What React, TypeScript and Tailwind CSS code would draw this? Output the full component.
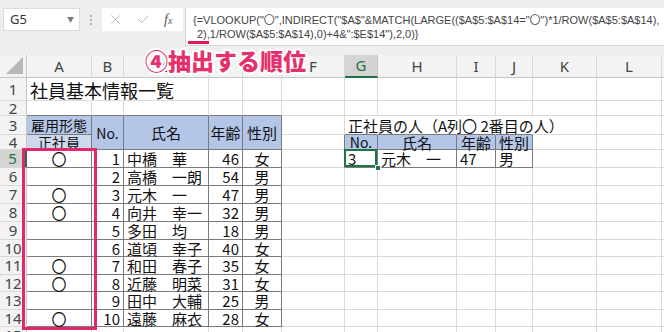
import React from 'react';
import { X, Check } from 'lucide-react';

type Align = 'l' | 'c' | 'r';
type CellData = { t: string; a?: Align; bg?: 'blue' | 'pale'; big?: boolean; sm?: boolean };

const COLS = ['A', 'B', 'C', 'D', 'E', 'F', 'G', 'H', 'I', 'J', 'K', 'L', 'M'];
const LAST_ROW = 15;

// [No, 氏名, 年齢, 性別, 正社員]
const people: [number, string, number, string, boolean][] = [
  [1, '中橋　華', 46, '女', true],
  [2, '高橋　一朗', 54, '男', false],
  [3, '元木　一', 47, '男', true],
  [4, '向井　幸一', 32, '男', true],
  [5, '多田　均', 18, '男', false],
  [6, '道頃　幸子', 40, '女', false],
  [7, '和田　春子', 35, '女', true],
  [8, '近藤　明菜', 31, '女', true],
  [9, '田中　大輔', 25, '男', false],
  [10, '遠藤　麻衣', 28, '女', true],
];

const cells: Record<string, CellData> = {
  '1,0': { t: '社員基本情報一覧', a: 'l', big: true },
  '3,0': { t: '雇用形態', a: 'c', bg: 'blue', sm: true },
  '4,0': { t: '正社員', a: 'c', bg: 'pale', sm: true },
  '3,1': { t: 'No.', a: 'c', bg: 'blue', sm: true },
  '3,2': { t: '氏名', a: 'c', bg: 'blue' },
  '3,3': { t: '年齢', a: 'c', bg: 'blue' },
  '3,4': { t: '性別', a: 'c', bg: 'blue' },
  '3,6': { t: '正社員の人（A列〇 2番目の人）', a: 'l' },
  '4,6': { t: 'No.', a: 'c', bg: 'blue', sm: true },
  '4,7': { t: '氏名', a: 'c', bg: 'blue' },
  '4,8': { t: '年齢', a: 'c', bg: 'blue' },
  '4,9': { t: '性別', a: 'c', bg: 'blue' },
  '5,6': { t: '3', a: 'l' },
  '5,7': { t: '元木　一', a: 'l' },
  '5,8': { t: '47', a: 'l' },
  '5,9': { t: '男', a: 'l' },
};
people.forEach(([no, name, age, sex, regular], i) => {
  const r = i + 5;
  if (regular) cells[`${r},0`] = { t: '〇', a: 'c' };
  cells[`${r},1`] = { t: String(no), a: 'r' };
  cells[`${r},2`] = { t: name, a: 'l' };
  cells[`${r},3`] = { t: String(age), a: 'r' };
  cells[`${r},4`] = { t: sex, a: 'c' };
});

const inTable = (r: number, c: number) =>
  (r >= 3 && r <= 14 && c >= 0 && c <= 4) || (r >= 4 && r <= 5 && c >= 6 && c <= 9);

const isMerged = (r: number, c: number) => r === 3 && c >= 1 && c <= 4;
const hiddenRight = (r: number, c: number) => (r === 1 && c <= 1) || (r === 3 && c >= 6 && c <= 9);

const alignCls: Record<Align, string> = {
  l: 'justify-start pl-[3px]',
  c: 'justify-center',
  r: 'justify-end pr-[3px]',
};

const Cell: React.FC<{ r: number; c: number }> = ({ r, c }) => {
  const d = cells[`${r},${c}`];
  const bottomRow = isMerged(r, c) ? 4 : r;
  const right = hiddenRight(r, c)
    ? 'border-r-transparent'
    : inTable(r, c) || inTable(r, c + 1)
      ? 'border-r-[#7a7a7a]'
      : 'border-r-[#dadada]';
  const bottom =
    inTable(bottomRow, c) || inTable(bottomRow + 1, c) ? 'border-b-[#7a7a7a]' : 'border-b-[#dadada]';
  const bg = d?.bg === 'blue' ? 'bg-[#b4c6e7]' : d?.bg === 'pale' ? 'bg-[#cfd9ee]' : '';
  const size = d?.big ? 'text-[18px] items-end pb-[1px]' : d?.sm ? 'text-[14px] items-center' : 'text-[15px] items-center';
  const selected = r === 5 && c === 6;

  return (
    <div
      className={`relative flex whitespace-nowrap leading-none text-[#111] border-r border-b ${right} ${bottom} ${bg} ${size} ${
        isMerged(r, c) ? 'row-span-2' : ''
      } ${alignCls[d?.a ?? 'l']}`}
    >
      {d && <span className="relative z-10">{d.t}</span>}
      {selected && (
        <>
          <div className="absolute -left-px -top-px w-[calc(100%+1px)] h-[calc(100%+1px)] border-2 border-[#217346] z-20" />
          <div className="absolute right-[-4px] bottom-[-4px] w-[6px] h-[6px] bg-[#217346] border border-white z-30" />
        </>
      )}
    </div>
  );
};

export default function App() {
  const rows = Array.from({ length: LAST_ROW }, (_, i) => i + 1);

  return (
    <div className="relative w-[664px] h-[332px] overflow-hidden bg-white font-['Noto_Sans_CJK_JP',sans-serif]">
      {/* Formula bar */}
      <div className="relative h-[55px] bg-[#eeeeee] flex items-start pt-[8px]">
        <div className="ml-[3px] w-[77px] h-[23px] bg-white border border-[#dcdcdc] flex items-center justify-between pl-[6px] pr-[5px]">
          <span className="text-[13px] text-[#333] font-['Noto_Sans',sans-serif]">G5</span>
          <span className="text-[7px] text-[#777]">▼</span>
        </div>
        <div className="w-[22px] h-[23px] flex flex-col items-center justify-center gap-[2px]">
          <span className="w-[2px] h-[2px] bg-[#b0b0b0]" />
          <span className="w-[2px] h-[2px] bg-[#b0b0b0]" />
          <span className="w-[2px] h-[2px] bg-[#b0b0b0]" />
        </div>
        <div className="w-[81px] h-[23px] bg-white flex items-center pl-[6px] gap-[13px]">
          <X size={15} strokeWidth={1.3} className="text-[#a8a8a8]" />
          <Check size={15} strokeWidth={1.3} className="text-[#a8a8a8]" />
          <span className="font-['Liberation_Serif',serif] italic text-[14px] text-[#555] leading-none">
            f<span className="text-[10px]">x</span>
          </span>
        </div>
        <div className="ml-[2px] flex-1 h-[38px] bg-white border-l border-b border-[#d6d6d6] pl-[7px] pt-[5px] text-[11px] leading-[14px] text-[#444] font-['Liberation_Sans','Noto_Sans_CJK_JP',sans-serif] whitespace-nowrap overflow-hidden">
          <div>{'{=VLOOKUP("〇",INDIRECT("$A$"&MATCH(LARGE(($A$5:$A$14="〇")*1/ROW($A$5:$A$14),'}</div>
          <div className="pl-[4px]">{'2),1/ROW($A$5:$A$14),0)+4&":$E$14"),2,0)}'}</div>
        </div>
        <div className="absolute left-[188px] top-[41px] w-[21px] h-[3px] bg-[#e3185b]" />
      </div>

      {/* Sheet grid */}
      <div className="grid grid-cols-[27px_65px_32px_85px_34px_39px_63px_33px_79px_39px_37px_64px_65px_80px] grid-rows-[23px_23px_15px_19px_15px_18px_18px_18px_18px_18px_17px_18px_17px_18px_17px_18px]">
        {/* corner */}
        <div className="relative bg-[#f3f3f3] border-r border-b border-[#c6c6c6]">
          <div className="absolute right-[3px] bottom-[3px] w-0 h-0 border-l-[17px] border-l-transparent border-b-[17px] border-b-[#b8b8b8]" />
        </div>
        {COLS.map((col, c) => (
          <div
            key={col}
            className={`flex items-center justify-center text-[15px] font-['Noto_Sans',sans-serif] border-r ${
              c === 6
                ? 'bg-[#d4d4d4] text-[#217346] border-b-2 border-b-[#217346] border-r-[#c6c6c6]'
                : 'bg-[#f3f3f3] text-[#444] border-b border-b-[#c6c6c6] border-r-[#d8d8d8]'
            }`}
          >
            {col}
          </div>
        ))}
        {rows.map((r) => (
          <React.Fragment key={r}>
            <div
              className={`flex items-center justify-center text-[15px] leading-none font-['Noto_Sans',sans-serif] border-b border-b-[#d8d8d8] ${
                r === 5
                  ? 'bg-[#d4d4d4] text-[#217346] border-r-2 border-r-[#217346]'
                  : 'bg-[#f3f3f3] text-[#444] border-r border-r-[#c6c6c6]'
              }`}
            >
              {r}
            </div>
            {COLS.map((_, c) => (r === 4 && c >= 1 && c <= 4 ? null : <Cell key={c} r={r} c={c} />))}
          </React.Fragment>
        ))}
      </div>

      {/* Annotations */}
      <div className="absolute left-[22px] top-[148px] w-[75px] h-[182px] border-[3px] border-[#e0286b] z-40" />
      <div className="absolute left-[145px] top-[49px] z-40 text-[23px] font-black leading-none text-[#e6306b] [-webkit-text-stroke:4px_white] [paint-order:stroke_fill] whitespace-nowrap">
        ④抽出する順位
      </div>
    </div>
  );
}
